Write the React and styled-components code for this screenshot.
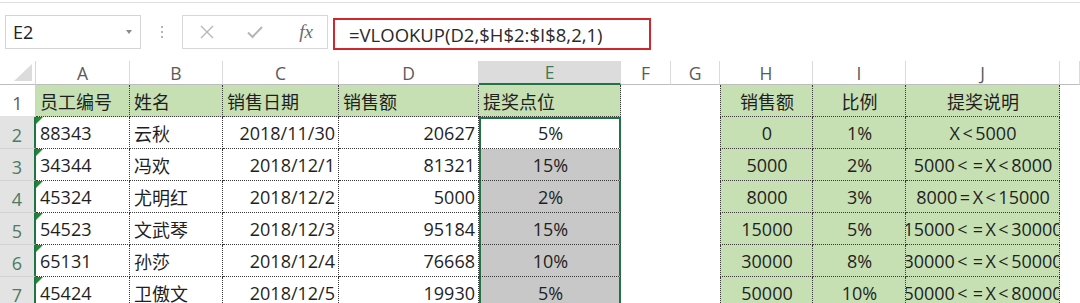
import React from 'react'
import styled, { createGlobalStyle, css } from 'styled-components'

const GlobalStyle = createGlobalStyle`
  html, body {
    margin: 0;
    padding: 0;
    background: #ffffff;
    overflow: hidden;
  }

  body {
    font-family: "Open Sans", "Noto Sans CJK SC", sans-serif;
    color: #1f1f1f;
  }
`

const Sheet = styled.div`
  width: 1080px;
  height: 303px;
  overflow: hidden;
`

const FormulaBar = styled.div`
  margin-top: 2px;
  border-top: 1px solid #dedede;
  height: 59px;
  box-sizing: border-box;
  padding-top: 12px;

  display: flex;
  flex-flow: row nowrap;
  align-items: flex-start;
`

const NameBox = styled.div`
  width: 136px;
  height: 34px;
  margin-left: 5px;
  box-sizing: border-box;
  border: 1px solid #d4d4d4;
  padding: 0 8px 0 7px;

  display: flex;
  align-items: center;
  justify-content: space-between;

  font-size: 18px;
  color: #222;
`

const DropArrow = styled.span`
  width: 0;
  height: 0;
  border-left: 3px solid transparent;
  border-right: 3px solid transparent;
  border-top: 4px solid #8a8a8a;
`

const Grip = styled.div`
  width: 41px;
  height: 34px;

  display: flex;
  flex-flow: column nowrap;
  align-items: center;
  justify-content: center;
  gap: 3px;

  span {
    width: 2px;
    height: 2px;
    background: #b4b4b4;
  }
`

const FxBox = styled.div`
  width: 146px;
  height: 34px;
  box-sizing: border-box;
  border: 1px solid #d8d8d8;

  display: grid;
  grid-template-columns: repeat(3, 1fr);
  align-items: center;
  justify-items: center;
`

const FxLabel = styled.span`
  font-family: "Liberation Serif", serif;
  font-style: italic;
  font-size: 19px;
  color: #6a6a6a;
  margin-left: 6px;
`

const FormulaInput = styled.div`
  flex: 1;
  height: 34px;
  display: flex;
  align-items: flex-start;
`

const Annotation = styled.div`
  width: 318px;
  height: 32px;
  margin: 3px 0 0 5px;
  box-sizing: border-box;
  border: 2px solid #d1262b;
  padding-left: 14px;

  display: flex;
  align-items: center;

  font-size: 18.5px;
  color: #2a2a2a;
  white-space: nowrap;
`

const Grid = styled.div`
  display: grid;
  grid-template-columns: 36px 94px 93px 116px 140px 142px 50px 49px 93px 93px 154px 1fr;
  grid-template-rows: 24px repeat(7, 32px);
`

const Corner = styled.div`
  position: relative;
  border-right: 1px solid #d6d6d6;
  border-bottom: 1px solid #bdbdbd;

  &::after {
    content: '';
    position: absolute;
    right: 3px;
    bottom: 3px;
    border-left: 18px solid transparent;
    border-bottom: 17px solid #dcdcdc;
  }
`

const ColHead = styled.div`
  box-sizing: border-box;
  border-right: 1px solid #dadada;
  border-bottom: 1px solid #bdbdbd;

  display: flex;
  align-items: center;
  justify-content: center;

  font-size: 17.5px;
  color: #5a5a5a;

  ${(p) => p.$active && css`
    background: #dcdcdc;
    color: #3f7a56;
    border-bottom: 2px solid #217346;
  `}
`

const RowHead = styled.div`
  box-sizing: border-box;
  border-right: 1px solid #d0d0d0;
  border-bottom: 1px solid #e2e2e2;

  display: flex;
  align-items: flex-end;
  justify-content: center;
  padding-bottom: 1px;

  font-size: 18px;
  color: #5a5a5a;

  ${(p) => p.$active && css`
    background: #e3e3e3;
    color: #4d7a60;
    border-right: 2px solid #217346;
    border-bottom: 1px solid #d2d2d2;
  `}
`

const fills = {
  green: '#c6e0b4',
  sel: '#c8c8c8',
  none: 'transparent',
}

const Cell = styled.div`
  position: relative;
  box-sizing: border-box;
  min-width: 0;
  overflow: hidden;
  white-space: nowrap;
  background: ${(p) => fills[p.$fill || 'none']};
  padding: 0 3px 0 4px;

  display: flex;
  align-items: center;
  justify-content: ${(p) => p.$align || 'flex-start'};

  font-size: 18px;
  color: #1f1f1f;

  ${(p) => p.$lined && css`
    border-right: 1px dotted #3a3a3a;
    border-bottom: 1px dotted #3a3a3a;
  `}

  ${(p) => p.$first && css`
    border-left: 1px dotted #3a3a3a;
  `}

  ${(p) => p.$picked && css`
    box-shadow: inset 2px 0 #217346, inset -2px 0 #217346;
    border-right: none;
  `}

  ${(p) => p.$top && css`
    box-shadow: inset 2px 0 #217346, inset -2px 0 #217346, inset 0 2px #217346;
  `}

  ${(p) => p.$flag && css`
    &::before {
      content: '';
      position: absolute;
      top: 0;
      left: 0;
      border-top: 7px solid #1e8a32;
      border-right: 7px solid transparent;
    }
  `}
`

const Spill = styled.span`
  flex: none;
`

const Sym = styled.span`
  margin: 0 2.5px;
`

const columns = ['A', 'B', 'C', 'D', 'E', 'F', 'G', 'H', 'I', 'J', '']

const rows = [
  ['88343', '云秋', '2018/11/30', '20627', '5%', '0', '1%', 'X<5000'],
  ['34344', '冯欢', '2018/12/1', '81321', '15%', '5000', '2%', '5000<=X<8000'],
  ['45324', '尤明红', '2018/12/2', '5000', '2%', '8000', '3%', '8000=X<15000'],
  ['54523', '文武琴', '2018/12/3', '95184', '15%', '15000', '5%', '15000<=X<30000'],
  ['65131', '孙莎', '2018/12/4', '76668', '10%', '30000', '8%', '30000<=X<50000'],
  ['45424', '卫傲文', '2018/12/5', '19930', '5%', '50000', '10%', '50000<=X<80000'],
]

// the spreadsheet font draws < and = with wide side bearings
function Rule({ text }) {
  return (
    <Spill>
      {text.split(/([<=])/).map(function (part, i) {
        if (part === '<' || part === '=') return <Sym key={i}>{part}</Sym>
        return <React.Fragment key={i}>{part}</React.Fragment>
      })}
    </Spill>
  )
}

function App() {
  return (
    <Sheet>
      <GlobalStyle />
      <FormulaBar>
        <NameBox>
          E2
          <DropArrow />
        </NameBox>
        <Grip>
          <span />
          <span />
          <span />
        </Grip>
        <FxBox>
          <svg width="16" height="16" viewBox="0 0 16 16">
            <path d="M2 2 L14 14 M14 2 L2 14" stroke="#b5b5b5" strokeWidth="1.3" fill="none" />
          </svg>
          <svg width="18" height="16" viewBox="0 0 18 16">
            <path d="M2 8.5 L6.5 13 L16 3" stroke="#b5b5b5" strokeWidth="2" fill="none" />
          </svg>
          <FxLabel>fx</FxLabel>
        </FxBox>
        <FormulaInput>
          <Annotation>=VLOOKUP(D2,$H$2:$I$8,2,1)</Annotation>
        </FormulaInput>
      </FormulaBar>

      <Grid>
        <Corner />
        {columns.map(function (c, i) {
          return (
            <ColHead key={'h' + i} $active={c === 'E'}>
              {c}
            </ColHead>
          )
        })}

        <RowHead>1</RowHead>
        <Cell $fill="green" $lined>员工编号</Cell>
        <Cell $fill="green" $lined>姓名</Cell>
        <Cell $fill="green" $lined>销售日期</Cell>
        <Cell $fill="green" $lined>销售额</Cell>
        <Cell $fill="green" $lined>提奖点位</Cell>
        <Cell />
        <Cell />
        <Cell $fill="green" $lined $first $align="center">销售额</Cell>
        <Cell $fill="green" $lined $align="center">比例</Cell>
        <Cell $fill="green" $lined $align="center">提奖说明</Cell>
        <Cell />

        {rows.map(function (r, i) {
          return (
            <React.Fragment key={r[0]}>
              <RowHead $active>{i + 2}</RowHead>
              <Cell $lined $flag>{r[0]}</Cell>
              <Cell $lined>{r[1]}</Cell>
              <Cell $lined $align="flex-end">{r[2]}</Cell>
              <Cell $lined $align="flex-end">{r[3]}</Cell>
              <Cell
                $lined
                $picked
                $top={i === 0}
                $fill={i === 0 ? 'none' : 'sel'}
                $align="center"
              >
                {r[4]}
              </Cell>
              <Cell />
              <Cell />
              <Cell $fill="green" $lined $first $align="center">{r[5]}</Cell>
              <Cell $fill="green" $lined $align="center">{r[6]}</Cell>
              <Cell $fill="green" $lined $align="center">
                <Rule text={r[7]} />
              </Cell>
              <Cell />
            </React.Fragment>
          )
        })}
      </Grid>
    </Sheet>
  )
}

export default App
